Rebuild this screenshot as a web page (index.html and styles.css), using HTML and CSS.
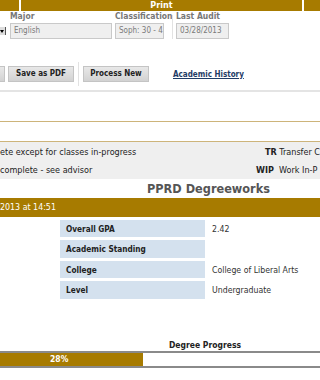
FILE: index.html
```html
<!DOCTYPE html>
<html>
  <head>
    <title>PPRD Degreeworks</title>
    <meta name="viewport" content="width=device-width, initial-scale=1" />
    <link rel="stylesheet" href="styles.css">
  </head>
  <body>
    <div class="topbar">
      <div class="seg seg-first"></div>
      <div class="seg seg-print">Print</div>
      <div class="seg seg-last"></div>
    </div>

    <div class="audit-row">
      <div class="select-stub"><span class="arrow"></span></div>
      <div class="field field-major">
        <div class="field-label">Major</div>
        <div class="field-box">English</div>
      </div>
      <div class="field field-class">
        <div class="field-label">Classification</div>
        <div class="field-box">Soph: 30 - 4</div>
      </div>
      <div class="vsep vsep-audit"></div>
      <div class="field field-audit">
        <div class="field-label">Last Audit</div>
        <div class="field-box">03/28/2013</div>
      </div>
    </div>

    <div class="button-row">
      <span class="btn btn-cut"></span>
      <span class="btn btn-pdf">Save as PDF</span>
      <div class="vsep vsep-btn"></div>
      <span class="btn btn-new">Process New</span>
      <a class="history-link" href="#">Academic History</a>
    </div>
    <div class="rule"></div>

    <div class="notice-box"></div>
    <div class="legend">
      <div class="legend-line">
        <span class="legend-text">ete except for classes in-progress</span>
        <span class="legend-key key-tr"><b>TR</b> Transfer C</span>
      </div>
      <div class="legend-line">
        <span class="legend-text">complete - see advisor</span>
        <span class="legend-key key-wip"><b>WIP</b>&nbsp; Work In-P</span>
      </div>
    </div>

    <h1 class="title">PPRD Degreeworks</h1>
    <div class="goldbar">2013 at 14:51</div>

    <div class="summary">
      <div class="sum-label">Overall GPA</div><div class="sum-value">2.42</div>
      <div class="sum-label">Academic Standing</div><div class="sum-value"></div>
      <div class="sum-label">College</div><div class="sum-value">College of Liberal Arts</div>
      <div class="sum-label">Level</div><div class="sum-value">Undergraduate</div>
    </div>

    <div class="progress-title">Degree Progress</div>
    <div class="progress">
      <div class="progress-fill" style="width: 143px">28%</div>
    </div>
  </body>
</html>
```

FILE: styles.css
```css
html {
  font-family: "DejaVu Sans", Verdana, sans-serif;
  font-stretch: condensed;
}
body {
  margin: 0;
  width: 320px;
  height: 380px;
  overflow: hidden;
  font-size: 8px;
  color: #222;
  background: #fff;
}
.topbar {
  display: flex;
  gap: 2px;
  height: 11px;
}
.seg {
  background: #a77b00;
}
.seg-first {
  width: 19px;
}
.seg-print {
  width: 281px;
  color: #fff;
  font-weight: bold;
  font-size: 9px;
  line-height: 11px;
  text-align: center;
}
.seg-last {
  flex: 1;
}
.audit-row {
  display: flex;
  align-items: flex-end;
  height: 28px;
}
.select-stub {
  width: 5px;
  height: 8px;
  margin-bottom: 4px;
  background: #ddd;
  border-right: 1px solid #555;
  position: relative;
}
.select-stub .arrow {
  position: absolute;
  left: 0;
  top: 3px;
  border-left: 2px solid transparent;
  border-right: 2px solid transparent;
  border-top: 3px solid #000;
}
.field-label {
  font-weight: bold;
  color: #777;
  font-size: 8.5px;
  line-height: 10px;
  margin-bottom: 2px;
  white-space: nowrap;
}
.field-box {
  height: 14px;
  line-height: 14px;
  border: 1px solid #c9c9c9;
  background: #efefef;
  color: #7a7a7a;
  padding-left: 3px;
  font-size: 8px;
  white-space: nowrap;
  overflow: hidden;
}
.field-major {
  margin-left: 4px;
  width: 102px;
}
.field-class {
  margin-left: 3px;
  width: 49px;
}
.field-class .field-box {
  padding-left: 3px;
}
.field-audit {
  margin-left: 3px;
  width: 53px;
}
.vsep {
  width: 1px;
  background: #e2e2e2;
}
.vsep-audit {
  height: 24px;
  margin-left: 8px;
}
.button-row {
  display: flex;
  align-items: center;
  height: 24px;
  margin-top: 23px;
}
.btn {
  height: 14px;
  line-height: 14px;
  border: 1px solid #c4c4c4;
  background: linear-gradient(#e8e8e8, #d2d2d2);
  font-weight: bold;
  font-size: 8px;
  text-align: center;
  color: #222;
}
.btn-cut {
  width: 4px;
  border-left: none;
}
.btn-pdf {
  width: 64px;
  margin-left: 3px;
}
.vsep-btn {
  height: 24px;
  margin-left: 4px;
}
.btn-new {
  width: 64px;
  margin-left: 4px;
}
.history-link {
  margin-left: 24px;
  color: #1f3c66;
  font-weight: bold;
  font-size: 8px;
}
.rule {
  height: 2px;
  margin-top: 4px;
  background: #e4e4e4;
}
.notice-box {
  margin-top: 29px;
  height: 19px;
  border-top: 1px solid #cdb47a;
  border-bottom: 1px solid #cdb47a;
}
.legend {
  background: #efefef;
  padding-top: 1px;
  height: 36px;
}
.legend-line {
  display: flex;
  height: 18px;
  line-height: 19px;
  white-space: nowrap;
  font-size: 9px;
}
.legend-text {
  flex: 1;
}
.key-tr {
  width: 55px;
}
.key-wip {
  width: 64px;
}
.title {
  margin: 0;
  height: 19px;
  line-height: 20px;
  padding-left: 147px;
  font-size: 12.6px;
  color: #555;
  white-space: nowrap;
}
.goldbar {
  height: 19px;
  line-height: 19px;
  background: #a77b00;
  color: #fff;
  font-size: 8.8px;
}
.summary {
  display: grid;
  grid-template-columns: 145px 1fr;
  row-gap: 2.7px;
  margin: 2.7px 0 0 60px;
}
.sum-label {
  height: 17.7px;
  line-height: 18px;
  background: #d4e1ee;
  padding-left: 6px;
  font-weight: bold;
  font-size: 8.2px;
}
.sum-value {
  padding-left: 7px;
  line-height: 18px;
  color: #333;
  font-size: 8.7px;
}
.progress-title {
  margin-top: 40px;
  padding-left: 169px;
  font-weight: bold;
  font-size: 8.5px;
  line-height: 12px;
}
.progress {
  height: 13px;
  border-top: 2px solid #8a8a8a;
  border-bottom: 2px solid #8a8a8a;
  background: #fff;
}
.progress-fill {
  height: 13px;
  line-height: 13px;
  background: #a77b00;
  color: #fff;
  font-weight: bold;
  font-size: 8.5px;
  padding-left: 50px;
  box-sizing: border-box;
}
```
